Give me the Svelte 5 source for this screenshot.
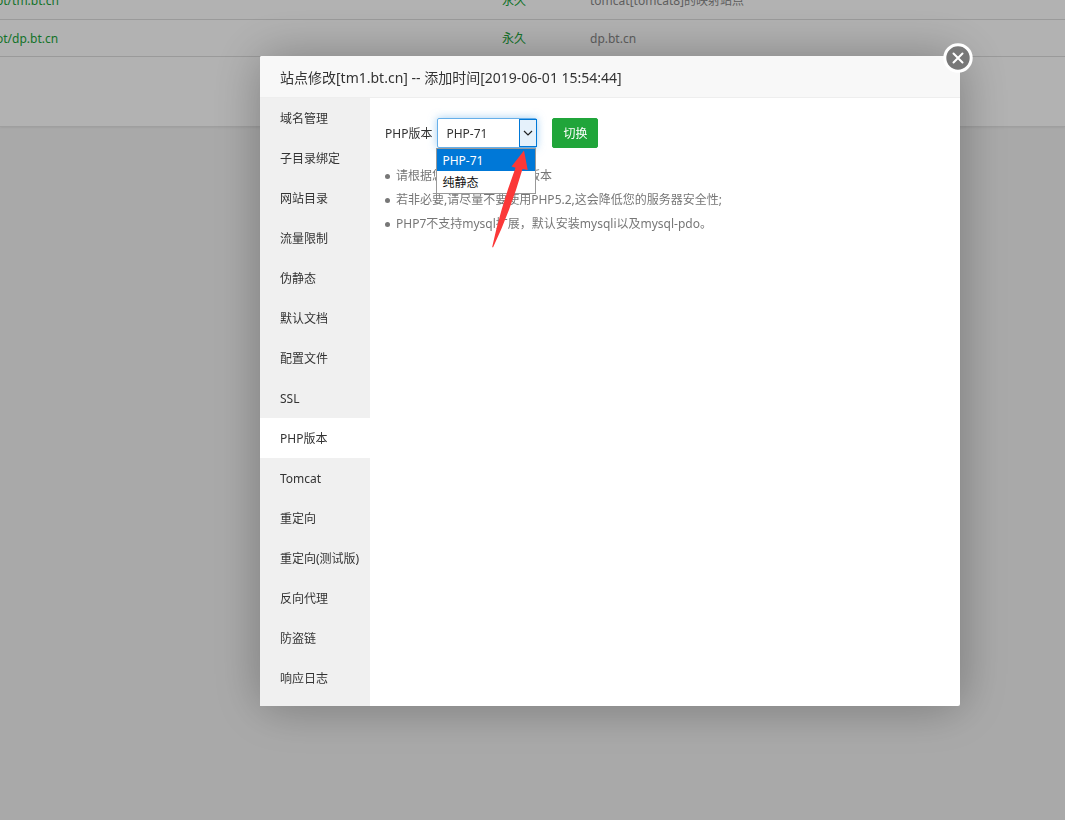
<script>
  const sites = [
    { path: 'ot/tm.bt.cn', expires: '永久', note: 'tomcat[tomcat8]的映射站点' },
    { path: 'ot/dp.bt.cn', expires: '永久', note: 'dp.bt.cn' }
  ];
  const menu = [
    '域名管理', '子目录绑定', '网站目录', '流量限制', '伪静态', '默认文档', '配置文件', 'SSL',
    'PHP版本', 'Tomcat', '重定向', '重定向(测试版)', '反向代理', '防盗链', '响应日志'
  ];
  const versions = ['PHP-71', '纯静态'];
  const notes = [
    '请根据您的程序需求选择版本',
    '若非必要,请尽量不要使用PHP5.2,这会降低您的服务器安全性;',
    'PHP7不支持mysql扩展，默认安装mysqli以及mysql-pdo。'
  ];
  let active = $state('PHP版本');
  let version = $state('PHP-71');
</script>

<main class="page">
  <section class="panel">
    <table>
      <tbody>
        {#each sites as site}
          <tr>
            <td class="path"><a href="#path">{site.path}</a></td>
            <td class="expires"><a href="#expires">{site.expires}</a></td>
            <td>{site.note}</td>
          </tr>
        {/each}
      </tbody>
    </table>
  </section>
</main>

<div class="shade">
  <div class="dialog" role="dialog" aria-labelledby="dialog-title">
    <h1 id="dialog-title">站点修改[tm1.bt.cn] -- 添加时间[2019-06-01 15:54:44]</h1>
    <button class="close" aria-label="关闭">
      <svg viewBox="0 0 30 30" width="30" height="30">
        <circle cx="15" cy="15" r="13.2" fill="#787878" stroke="#fff" stroke-width="3" />
        <path d="M10.5 10.5l9 9M19.5 10.5l-9 9" stroke="#fff" stroke-width="2" stroke-linecap="round" />
      </svg>
    </button>
    <div class="body">
      <nav>
        {#each menu as item}
          <button class:active={item === active} onclick={() => (active = item)}>{item}</button>
        {/each}
      </nav>
      <section class="content">
        <div class="line">
          <label for="version">PHP版本</label>
          <div class="picker">
            <select id="version" bind:value={version}>
              {#each versions as v}
                <option>{v}</option>
              {/each}
            </select>
            <span class="drop">
              <svg viewBox="0 0 10 6" width="10" height="6">
                <path d="M1 1l4 4l4-4" fill="none" stroke="#222" stroke-width="1.2" />
              </svg>
            </span>
            <ul class="options" role="listbox" aria-label="PHP版本">
              {#each versions as v}
                <li role="option" aria-selected={v === version}>{v}</li>
              {/each}
            </ul>
            <svg class="pointer" viewBox="0 0 36 98" width="36" height="98" aria-hidden="true">
              <path d="M32 0.5L35.7 20L30.5 19Q18 62 1 97.5L0.2 97Q8 60 23.5 17.8L19.5 16.6Z" fill="#fb3838" />
            </svg>
          </div>
          <button class="switch">切换</button>
        </div>
        <ul class="notes">
          {#each notes as note}
            <li>{note}</li>
          {/each}
        </ul>
      </section>
    </div>
  </div>
</div>

<style>
  :global(body) {
    background: #f3f3f3;
    font-family: "Noto Sans", "Noto Sans CJK SC", sans-serif;
    font-size: 12px;
    line-height: 20px;
    color: #333;
  }
  * {
    box-sizing: border-box;
  }
  button, select {
    font: inherit;
    color: inherit;
    cursor: pointer;
  }
  .page {
    height: 100vh;
    overflow: hidden;
  }
  .panel {
    margin-top: -18px;
    padding-bottom: 69px;
    background: #fff;
    border-bottom: 1px solid #e4e4e4;
    box-shadow: 0 1px 2px rgba(0, 0, 0, 0.06);
  }
  table {
    width: 100%;
    border-collapse: collapse;
    table-layout: fixed;
  }
  td {
    height: 37px;
    padding: 2px 0 0;
    border-bottom: 1px solid #ddd;
    color: #888;
    white-space: nowrap;
  }
  td a {
    color: #20a53a;
    text-decoration: none;
  }
  .path {
    width: 502px;
    text-indent: -4px;
  }
  .expires {
    width: 88px;
  }
  .shade {
    position: fixed;
    inset: 0;
    padding: 56px 105px 0 260px;
    background: rgba(0, 0, 0, 0.3);
  }
  .dialog {
    position: relative;
    background: #fff;
    border-radius: 2px;
    box-shadow: 1px 1px 50px rgba(0, 0, 0, 0.3);
  }
  h1 {
    margin: 0;
    padding: 2px 20px 0;
    font-size: 14px;
    font-weight: 400;
    line-height: 39px;
    background: #f8f8f8;
    border-bottom: 1px solid #eee;
    border-radius: 2px 2px 0 0;
  }
  .close {
    position: absolute;
    top: -13px;
    right: -13px;
    padding: 0;
    border: 0;
    background: none;
    line-height: 0;
  }
  .body {
    display: flex;
  }
  nav {
    display: flex;
    flex-direction: column;
    flex: 0 0 110px;
    padding-bottom: 8px;
    background: #f0f0f0;
  }
  nav button {
    height: 40px;
    padding: 2px 0 0 20px;
    border: 0;
    background: none;
    text-align: left;
    white-space: nowrap;
  }
  nav button.active {
    background: #fff;
  }
  .content {
    flex: 1;
    padding: 20px 15px;
  }
  .line {
    display: flex;
    align-items: center;
  }
  label {
    padding-top: 2px;
  }
  .picker {
    position: relative;
    margin: 0 15px 0 5px;
  }
  select {
    display: block;
    width: 100px;
    height: 30px;
    padding: 2px 8px 0;
    appearance: none;
    background: #fff;
    border: 1px solid #66afe9;
    border-radius: 2px;
    outline: 0;
    box-shadow: 0 0 8px rgba(102, 175, 233, 0.6);
  }
  .drop {
    position: absolute;
    top: 1px;
    right: 0;
    display: grid;
    place-items: center;
    width: 18px;
    height: 28px;
    background: #e5f1fb;
    border: 1px solid #0078d7;
    pointer-events: none;
  }
  ul {
    margin: 0;
    padding: 0;
    list-style: none;
  }
  .options {
    position: absolute;
    top: 30px;
    left: -1px;
    width: 100px;
    background: #fff;
    border: 1px solid #999;
  }
  .options li {
    padding: 2px 5px 0;
    line-height: 20px;
    color: #111;
  }
  .options li[aria-selected='true'] {
    background: #0078d7;
    color: #fff;
  }
  .pointer {
    position: absolute;
    top: 32px;
    left: 55px;
    pointer-events: none;
  }
  .switch {
    height: 30px;
    padding: 2px 9px 0;
    min-width: 46px;
    border: 1px solid #20a53a;
    border-radius: 2px;
    background: #20a53a;
    color: #fff;
  }
  .notes {
    margin-top: 16px;
    line-height: 24px;
    color: #777;
  }
  .notes li {
    display: flex;
    align-items: center;
    gap: 6px;
    white-space: nowrap;
  }
  .notes li::before {
    content: '';
    width: 5px;
    height: 5px;
    border-radius: 50%;
    background: #777;
  }
</style>
